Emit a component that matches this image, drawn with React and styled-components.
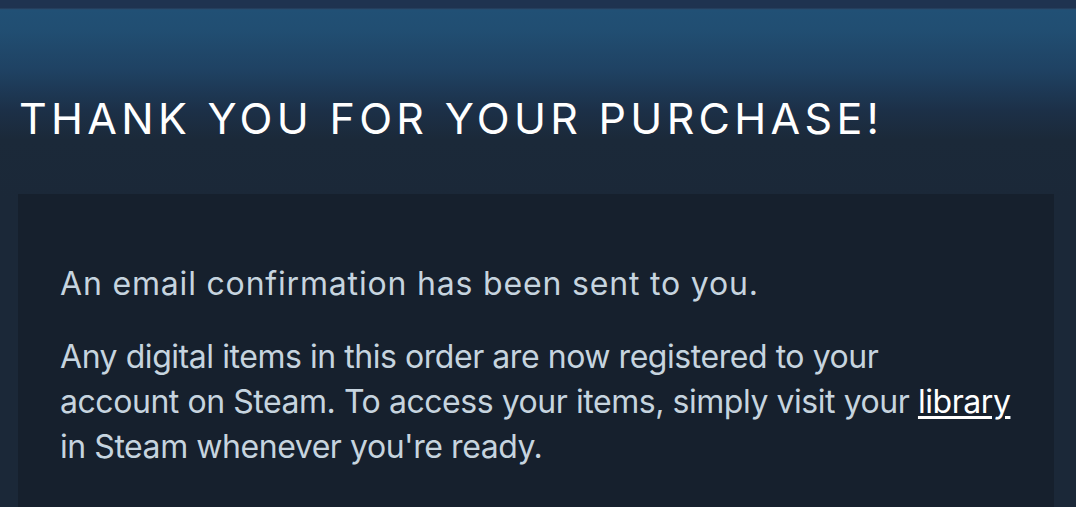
import React from "react";
import styled, { createGlobalStyle } from "styled-components";

const Global = createGlobalStyle`
  html, body { margin: 0; padding: 0; background: #1b2838; }
  body { font-family: Inter, "Liberation Sans", sans-serif; }
`;

const Page = styled.div`
  height: 507px;
  display: flex;
  flex-direction: column;
  background: linear-gradient(
    to bottom,
    #1f3350 0px,
    #1f3350 8px,
    #2a4a6a 9px,
    #215075 10px,
    #214e72 30px,
    #1f4263 70px,
    #1c3048 110px,
    #1b2939 140px,
    #1b2838 200px
  );
  padding: 97px 22px 0 18px;
  box-sizing: border-box;
  overflow: hidden;
`;

const Heading = styled.h1`
  margin: 0 0 55px;
  padding: 0 0 0 1px;
  font-size: 43px;
  font-weight: 400;
  letter-spacing: 4.3px;
  color: #ffffff;
  text-transform: uppercase;
  line-height: 42px;
  white-space: nowrap;
`;

const Panel = styled.div`
  flex: 1;
  background: #16202d;
  padding: 67px 24px 0 42px;
  box-sizing: border-box;
`;

const Para = styled.p`
  margin: 0 0 28px;
  font-size: 32px;
  line-height: 45px;
  letter-spacing: ${(p) => (p.$wide ? "0.82px" : "-0.45px")};
  color: #c6d4df;
`;

const Link = styled.a`
  color: #ffffff;
  text-decoration: underline;
  text-underline-offset: 3px;
`;

export default function App() {
  return (
    <>
      <Global />
      <Page>
        <Heading>Thank you for your purchase!</Heading>
        <Panel>
          <Para $wide>An email confirmation has been sent to you.</Para>
          <Para>
            Any digital items in this order are now registered to your
            <br />
            account on Steam. To access your items, simply visit your{" "}
            <Link href="#">library</Link> in Steam whenever you're ready.
          </Para>
        </Panel>
      </Page>
    </>
  );
}
